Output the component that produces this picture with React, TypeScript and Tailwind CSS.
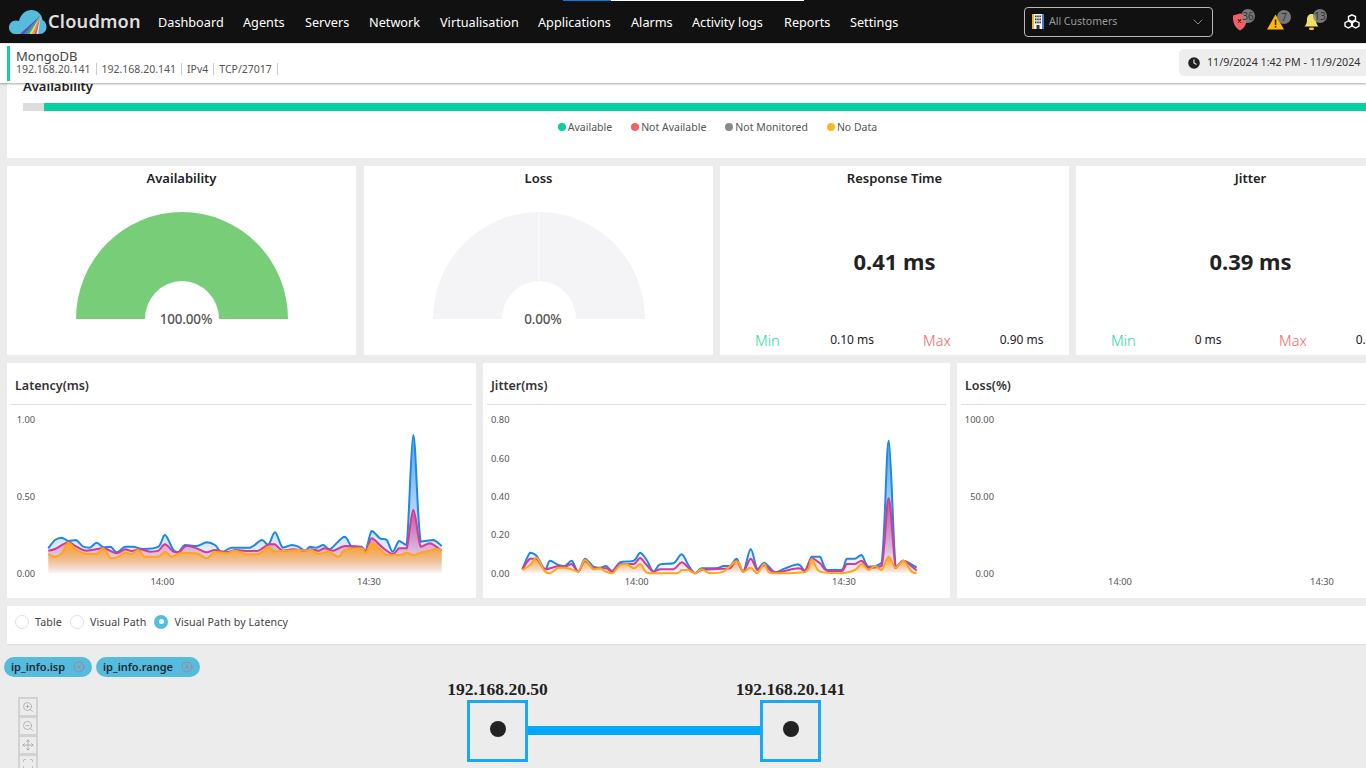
import React from "react";
import { ChevronDown, ZoomIn, ZoomOut, Move, Scan, XCircle } from "lucide-react";

type P = [number, number];
const BASE = 520;

function clamp(v: number, a: number, b: number) {
  return Math.min(Math.max(v, Math.min(a, b)), Math.max(a, b));
}
function line(p: P[]) {
  let d = `M${p[0][0]} ${p[0][1]}`;
  for (let i = 0; i < p.length - 1; i++) {
    const a = p[Math.max(i - 1, 0)], b = p[i], c = p[i + 1], e = p[Math.min(i + 2, p.length - 1)];
    const c1x = b[0] + (c[0] - a[0]) / 6, c1y = clamp(b[1] + (c[1] - a[1]) / 6, b[1], c[1]);
    const c2x = c[0] - (e[0] - b[0]) / 6, c2y = clamp(c[1] - (e[1] - b[1]) / 6, b[1], c[1]);
    d += ` C${c1x.toFixed(1)} ${c1y.toFixed(1)} ${c2x.toFixed(1)} ${c2y.toFixed(1)} ${c[0]} ${c[1]}`;
  }
  return d;
}
function area(p: P[]) {
  return `${line(p)} L${p[p.length - 1][0]} ${BASE} L${p[0][0]} ${BASE} Z`;
}

const latBlue: P[] = [[145,445],[165,420],[185,413],[205,423],[228,420],[250,440],[270,443],[290,428],[310,442],[332,440],[350,457],[375,440],[400,440],[430,447],[475,440],[495,405],[520,450],[535,457],[555,435],[590,438],[620,427],[645,435],[665,457],[695,443],[750,443],[785,420],[805,435],[825,397],[848,443],[875,435],[895,440],[915,452],[930,440],[950,443],[970,435],[990,448],[1033,410],[1055,440],[1085,440],[1097,455],[1115,393],[1140,415],[1160,420],[1178,455],[1197,423],[1220,435],[1240,105],[1262,425],[1300,420],[1325,438]];
const latPink: P[] = [[145,452],[165,447],[205,427],[230,440],[260,452],[310,445],[350,460],[375,448],[395,453],[420,448],[450,455],[475,452],[495,433],[520,455],[535,458],[560,437],[590,445],[620,457],[645,450],[680,457],[705,450],[740,453],[775,452],[805,433],[825,433],[848,452],[880,448],[915,452],[935,448],[955,452],[975,445],[1000,452],[1035,438],[1085,442],[1097,457],[1115,415],[1145,440],[1178,462],[1197,445],[1220,445],[1240,330],[1262,440],[1290,430],[1325,452]];
const latOrange: P[] = [[145,462],[165,470],[185,460],[205,428],[230,450],[260,462],[290,462],[310,445],[332,475],[350,472],[375,458],[395,462],[415,450],[435,470],[475,470],[495,455],[515,470],[545,458],[590,460],[620,475],[645,455],[680,460],[705,452],[740,463],[775,463],[805,440],[825,455],[855,452],[895,450],[915,452],[935,450],[955,462],[985,455],[1015,470],[1035,450],[1085,445],[1097,460],[1115,430],[1145,452],[1160,465],[1200,465],[1220,458],[1240,465],[1262,458],[1310,447],[1325,452]];

const jitBlue: P[] = [[127,508],[150,458],[170,468],[195,508],[210,482],[235,495],[255,498],[275,482],[295,515],[315,476],[340,500],[360,503],[378,498],[397,513],[420,487],[462,482],[480,458],[500,480],[520,515],[540,493],[580,490],[605,463],[625,495],[645,520],[665,505],[710,505],[730,498],[750,498],[770,476],[790,515],[812,447],[832,508],[853,488],[885,517],[915,505],[955,493],[975,512],[995,470],[1020,470],[1040,510],[1085,510],[1100,476],[1125,476],[1145,465],[1165,500],[1205,488],[1226,122],[1247,503],[1270,482],[1310,503]];
const jitPink: P[] = [[127,508],[150,476],[170,476],[195,508],[235,498],[255,500],[275,492],[295,515],[315,482],[340,505],[378,505],[397,515],[420,492],[462,492],[480,474],[500,495],[520,515],[540,508],[580,508],[605,487],[625,503],[645,520],[665,510],[730,506],[750,505],[770,482],[790,515],[812,476],[832,510],[853,495],[885,517],[955,505],[975,514],[995,475],[1020,490],[1040,512],[1085,514],[1100,492],[1125,492],[1145,482],[1165,503],[1205,498],[1226,295],[1247,503],[1270,482],[1310,512]];
const jitOrange: P[] = [[127,510],[150,495],[170,473],[195,515],[210,520],[235,503],[255,503],[275,508],[295,515],[315,480],[340,508],[360,505],[378,515],[397,520],[420,495],[440,492],[462,505],[480,492],[500,518],[520,520],[590,520],[605,510],[625,510],[645,520],[665,508],[690,520],[730,515],[770,484],[790,515],[812,503],[832,520],[853,492],[875,520],[975,516],[995,478],[1020,515],[1085,520],[1125,510],[1145,492],[1165,510],[1185,498],[1205,510],[1226,470],[1247,503],[1270,482],[1295,515],[1310,520]];

function Series({ id, blue, pink, orange }: { id: string; blue: P[]; pink: P[]; orange: P[] }) {
  return (
    <>
      <defs>
        <linearGradient id={`${id}b`} x1="0" y1="0" x2="0" y2="1">
          <stop offset="0" stopColor="#1e88e5" stopOpacity="0.75" />
          <stop offset="1" stopColor="#1e88e5" stopOpacity="0.02" />
        </linearGradient>
        <linearGradient id={`${id}p`} x1="0" y1="0" x2="0" y2="1">
          <stop offset="0" stopColor="#d63a92" stopOpacity="0.8" />
          <stop offset="1" stopColor="#d63a92" stopOpacity="0.02" />
        </linearGradient>
        <linearGradient id={`${id}o`} x1="0" y1="0" x2="0" y2="1">
          <stop offset="0" stopColor="#ffa41b" stopOpacity="0.95" />
          <stop offset="1" stopColor="#ffa41b" stopOpacity="0.02" />
        </linearGradient>
      </defs>
      <path d={area(blue)} fill={`url(#${id}b)`} />
      <path d={area(pink)} fill={`url(#${id}p)`} />
      <path d={area(orange)} fill={`url(#${id}o)`} />
      <path d={line(blue)} fill="none" stroke="#1e88e5" strokeWidth="6" />
      <path d={line(pink)} fill="none" stroke="#d63a92" strokeWidth="6" />
      <path d={line(orange)} fill="none" stroke="#ffa41b" strokeWidth="6" />
    </>
  );
}

const axis = { fontSize: 28, fill: "#555" };

function Latency() {
  return (
    <svg width="469" height="193" viewBox="21 15 1407 579">
      <text x="50" y="68" {...axis}>1.00</text>
      <text x="50" y="300" {...axis}>0.50</text>
      <text x="50" y="530" {...axis}>0.00</text>
      <text x="487" y="555" textAnchor="middle" {...axis}>14:00</text>
      <text x="1107" y="555" textAnchor="middle" {...axis}>14:30</text>
      <Series id="l" blue={latBlue} pink={latPink} orange={latOrange} />
    </svg>
  );
}
function Jitter() {
  return (
    <svg width="467" height="193" viewBox="9 15 1401 579">
      {([["0.80", 68], ["0.60", 185], ["0.40", 300], ["0.20", 415], ["0.00", 530]] as [string, number][]).map(([t, y]) => (
        <text key={t} x="33" y={y} {...axis}>{t}</text>
      ))}
      <text x="470" y="555" textAnchor="middle" {...axis}>14:00</text>
      <text x="1092" y="555" textAnchor="middle" {...axis}>14:30</text>
      <Series id="j" blue={jitBlue} pink={jitPink} orange={jitOrange} />
    </svg>
  );
}
function LossChart() {
  return (
    <svg width="469" height="193" viewBox="-9 15 1407 579">
      <text x="102" y="68" textAnchor="end" {...axis}>100.00</text>
      <text x="102" y="300" textAnchor="end" {...axis}>50.00</text>
      <text x="102" y="530" textAnchor="end" {...axis}>0.00</text>
      <text x="480" y="555" textAnchor="middle" {...axis}>14:00</text>
      <text x="1086" y="555" textAnchor="middle" {...axis}>14:30</text>
    </svg>
  );
}

function Logo() {
  return (
    <svg width="38" height="26" viewBox="9 8 38 26" className="shrink-0">
      <path d="M15 33C11.5 33 9 30 9 26.5C9 22.5 12 19.5 16 19.5C17 19.5 18 19.7 19 20C20.5 13.5 25.5 9 31.5 9C37.5 9 42 13.5 42.5 19C45 20 46.5 23 46.5 26C46.5 30 43.5 33 40 33Z" fill="#55bcde" />
      <polygon points="41,14 20,33 24,33" fill="#6d45ad" />
      <polygon points="41,14 24,33 27,33" fill="#3f7fd2" />
      <polygon points="41,14 27,33 29.5,33" fill="#35b56a" />
      <polygon points="41,14 29.5,33 32,33" fill="#f2e04a" />
      <polygon points="41,14 32,33 34.5,33" fill="#f5993a" />
      <polygon points="41,14 34.5,33 36.5,33" fill="#e8496a" />
      <polygon points="41,14 36.5,33 38,33" fill="#f4e9e0" />
    </svg>
  );
}

function Badge({ n, cls }: { n: string; cls: string }) {
  return (
    <span className={`absolute top-[-4px] flex h-[14px] w-[14px] items-center justify-center rounded-full bg-[#8a8a8ad9] text-[10px] leading-none text-[#333] ${cls}`}>
      {n}
    </span>
  );
}

const nav: [string, string][] = [
  ["Dashboard", "w-[85px]"], ["Agents", "w-[62px]"], ["Servers", "w-[64px]"], ["Network", "w-[71px]"],
  ["Virtualisation", "w-[98px]"], ["Applications", "w-[93px]"], ["Alarms", "w-[61px]"], ["Activity logs", "w-[92px]"],
  ["Reports", "w-[66px]"], ["Settings", "w-[60px]"],
];

function Header() {
  return (
    <header className="flex h-[43px] items-center bg-[#111111] pl-[9px]">
      <Logo />
      <span className="ml-[1px] w-[110px] text-[18.2px] font-semibold leading-none tracking-[0.2px] text-[#dedede]">Cloudmon</span>
      <nav className="flex pt-[2px]">
        {nav.map(([t, w]) => (
          <span key={t} className={`${w} shrink-0 whitespace-nowrap text-[12.7px] text-white`}>{t}</span>
        ))}
      </nav>
      <div className="ml-auto flex items-center pr-[6px]">
        <div className="flex h-[30px] w-[189px] items-center rounded-[4px] border border-[#b8b8b8] pl-[7px] pr-[6px]">
          <svg width="12" height="15" viewBox="0 0 12 15" className="shrink-0">
            <rect width="12" height="15" fill="#f5f5f5" />
            <rect width="2" height="15" fill="#f0b429" />
            <rect x="10" width="2" height="15" fill="#3b82c4" />
            {[3, 6, 9].map((y) => [3, 5.2, 7.4].map((x) => <rect key={`${x}${y}`} x={x} y={y - 1.5} width="1.5" height="1.8" fill="#333" />))}
            <rect x="4.5" y="11" width="3" height="4" fill="#333" />
          </svg>
          <span className="ml-[5px] pt-[1px] text-[10.5px] text-[#9a9a9a]">All Customers</span>
          <ChevronDown className="ml-auto text-[#a8a8a8]" size={16} strokeWidth={1.2} />
        </div>
        <div className="relative ml-[19px] h-[18px] w-[16px]">
          <svg width="16" height="18" viewBox="0 0 16 18">
            <path d="M1 2.5L8 .5L15 2.5C15.5 9 13.5 14.5 8 17.5C2.5 14.5.5 9 1 2.5Z" fill="#f05f63" />
            <path d="M6 6.5L9 9.5M9 6.5L6 9.5" stroke="#5a1518" strokeWidth="1.2" />
          </svg>
          <Badge n="36" cls="left-[9px]" />
        </div>
        <div className="relative ml-[19px] h-[16px] w-[17px]">
          <svg width="17" height="16" viewBox="0 0 17 16">
            <path d="M8.5 .5L17 15.5H0Z" fill="#ffb70f" />
            <rect x="7.8" y="5.5" width="1.5" height="5.5" fill="#222" />
            <rect x="7.8" y="12" width="1.5" height="1.6" fill="#222" />
          </svg>
          <Badge n="7" cls="left-[10px]" />
        </div>
        <div className="relative ml-[20px] h-[18px] w-[15px]">
          <svg width="15" height="18" viewBox="0 0 15 18">
            <path d="M7.5 1C4.5 1 3 3.5 3 6.5C3 10 2 12 .5 13.5H14.5C13 12 12 10 12 6.5C12 3.5 10.5 1 7.5 1Z" fill="#f0e266" />
            <rect x="5" y="14.5" width="5" height="2.5" rx="1.2" fill="#e8c93a" />
          </svg>
          <Badge n="13" cls="left-[9px]" />
        </div>
        <svg width="16" height="15" viewBox="0 0 16 15" className="ml-[25px]" fill="none" stroke="#fff" strokeWidth="1.4">
          <path d="M8 .8L11.5 2.5V6L8 7.7L4.5 6V2.5Z" />
          <path d="M4.3 7L7.6 8.7V12.2L4.3 14L1 12.2V8.7Z" />
          <path d="M11.7 7L15 8.7V12.2L11.7 14L8.4 12.2V8.7Z" />
        </svg>
      </div>
    </header>
  );
}

function SubHeader() {
  const parts = ["192.168.20.141", "192.168.20.141", "IPv4", "TCP/27017"];
  return (
    <div className="relative z-10 mt-[1px] flex h-[39px] justify-between bg-white pl-[7px] shadow-[0_1px_2px_rgba(0,0,0,0.35)]">
      <div className="my-[2px] flex border-l-[3px] border-[#12cfa0] pl-[6px]">
        <div className="pt-[3px]">
          <div className="text-[13px] leading-[14px] text-[#444]">MongoDB</div>
          <div className="flex text-[10.5px] leading-[12px] text-[#555]">
            {parts.map((p, i) => (
              <span key={i} className={`border-r border-[#ccc] pr-[5px] ${i ? "pl-[5px]" : ""}`}>{p}</span>
            ))}
          </div>
        </div>
      </div>
      <div className="mt-[5px] flex h-[27px] w-[200px] shrink-0 items-center self-start overflow-hidden whitespace-nowrap rounded-[5px] bg-[#eeeeee] pl-[9px] mr-[-13px]">
        <svg width="12" height="12" viewBox="0 0 12 12" className="shrink-0">
          <circle cx="6" cy="6" r="5.8" fill="#222" />
          <path d="M6 2.5V6L8.5 7.5" fill="none" stroke="#eee" strokeWidth="1.1" />
        </svg>
        <span className="ml-[7px] text-[10.7px] text-[#333]">11/9/2024 1:42 PM - 11/9/2024</span>
      </div>
    </div>
  );
}

function AvailabilityBar() {
  const legend: [string, string][] = [["Available", "bg-[#05d09f]"], ["Not Available", "bg-[#f26464]"], ["Not Monitored", "bg-[#8a8a8a]"], ["No Data", "bg-[#fdb81e]"]];
  return (
    <section className="flow-root h-[75px] w-[1420px] bg-white pl-[16px]">
      <h2 className="mt-[-7px] h-[20px] text-[13px] font-semibold leading-[20px] text-[#222]">Availability</h2>
      <div className="mt-[7px] flex h-[8px]">
        <div className="w-[21px] bg-[#dddddd]" />
        <div className="flex-1 bg-[#05d09f]" />
      </div>
      <div className="mt-[10px] flex w-[1389px] justify-center gap-[19px] text-[10.5px] leading-[12px] text-[#555]">
        {legend.map(([t, c]) => (
          <span key={t} className="flex items-center gap-[2px]">
            <i className={`h-[8px] w-[8px] rounded-full ${c}`} />
            {t}
          </span>
        ))}
      </div>
    </section>
  );
}

function Gauge({ title, value, green, cls }: { title: string; value: string; green: boolean; cls?: string }) {
  return (
    <section className={`flex h-[189px] w-[349px] shrink-0 flex-col items-center bg-white ${cls ?? ""}`}>
      <h3 className="h-[24px] text-[13px] font-semibold leading-[24px] text-[#222]">{title}</h3>
      <svg width="214" height="118" viewBox="-1 0 214 118" className="mt-[22px]">
        <path d="M0 107A106 107 0 0 1 212 107H143A37 38 0 0 0 69 107Z" fill={green ? "#78ce78" : "#f4f4f6"} />
        {!green && <line x1="106" y1="0" x2="106" y2="69" stroke="#fff" />}
        <text x="110" y="112" textAnchor="middle" fontSize="13.5" fontWeight="500" letterSpacing="-0.2" fill="#555">{value}</text>
      </svg>
    </section>
  );
}

function Stat({ title, value, min, max }: { title: string; value: string; min: string; max: string }) {
  return (
    <section className="flex h-[189px] w-[349px] shrink-0 flex-col bg-white px-[5px]">
      <h3 className="h-[24px] text-center text-[13px] font-semibold leading-[24px] text-[#222]">{title}</h3>
      <div className="mt-[56px] text-center text-[22px] font-bold leading-[30px] text-[#222]">{value}</div>
      <div className="mt-[52px] grid grid-cols-4 items-center text-center">
        <span className="text-[14.5px] font-light leading-[24px] text-[#1fd8a4]">Min</span>
        <span className="text-[12px] text-[#222]">{min}</span>
        <span className="text-[14.5px] font-light leading-[24px] text-[#f45f5f]">Max</span>
        <span className="text-[12px] text-[#222]">{max}</span>
      </div>
    </section>
  );
}

function ChartCard({ title, w, children }: { title: string; w: string; children: React.ReactNode }) {
  return (
    <section className={`${w} h-[235px] shrink-0 bg-white`}>
      <div className="mx-[4px] h-[42px] border-b border-[#dddddd] pl-[4px] text-[12.5px] font-semibold leading-[46px] text-[#333]">{title}</div>
      {children}
    </section>
  );
}

function Radio({ label, on }: { label: string; on?: boolean }) {
  return (
    <span className="flex items-center">
      {on ? (
        <span className="flex h-[14px] w-[14px] items-center justify-center rounded-full bg-[#55bcde]">
          <span className="h-[5px] w-[5px] rounded-full bg-white" />
        </span>
      ) : (
        <span className="h-[14px] w-[14px] rounded-full border border-[#dcdfe6]" />
      )}
      <span className="ml-[6px] text-[10.7px] tracking-[0.1px] text-[#444]">{label}</span>
    </span>
  );
}

function Tag({ t, w }: { t: string; w: string }) {
  return (
    <span className={`flex h-[20px] ${w} items-center justify-between rounded-full bg-[#55bcde] pl-[7px] pr-[7px] text-[11px] font-semibold text-[#1c2a33]`}>
      {t}
      <XCircle size={12} strokeWidth={1.3} className="shrink-0 text-[#e0606a]" />
    </span>
  );
}

function Node({ label }: { label: string }) {
  return (
    <div className="flex w-[61px] shrink-0 flex-col items-center">
      <div className="h-[22px] whitespace-nowrap font-[Liberation_Serif,serif] text-[17.5px] font-bold leading-[22px] text-[#222]">{label}</div>
      <div className="flex h-[62px] w-[61px] items-center justify-center border-[3px] border-[#1aa7f5]">
        <span className="mb-[4px] h-[16px] w-[16px] rounded-full bg-[#222]" />
      </div>
    </div>
  );
}

export default function App() {
  const tools = [ZoomIn, ZoomOut, Move, Scan];
  return (
    <div className="relative h-screen w-[1366px] overflow-hidden bg-[#ececec] font-[Noto_Sans,Liberation_Sans,sans-serif]">
      <div className="absolute left-[563px] top-0 z-20 flex h-[1px]">
        <div className="w-[48px] bg-[#0a78e0]" />
        <div className="w-[193px] bg-white" />
      </div>
      <Header />
      <SubHeader />
      <main className="w-[1430px] pl-[7px]">
        <AvailabilityBar />
        <div className="mt-[8px] flex gap-[7px]">
          <Gauge title="Availability" value="100.00%" green cls="mr-[1px]" />
          <Gauge title="Loss" value="0.00%" green={false} />
          <Stat title="Response Time" value="0.41 ms" min="0.10 ms" max="0.90 ms" />
          <Stat title="Jitter" value="0.39 ms" min="0 ms" max="0.69 ms" />
        </div>
        <div className="mt-[8px] flex gap-[7px]">
          <ChartCard title="Latency(ms)" w="w-[469px]"><Latency /></ChartCard>
          <ChartCard title="Jitter(ms)" w="w-[467px]"><Jitter /></ChartCard>
          <ChartCard title="Loss(%)" w="w-[469px]"><LossChart /></ChartCard>
        </div>
        <div className="mt-[8px] flex h-[38px] w-[1420px] items-center gap-[8px] bg-white pb-[6px] pl-[8px] shadow-[0_1px_1px_rgba(0,0,0,0.05)]">
          <Radio label="Table" />
          <Radio label="Visual Path" />
          <Radio label="Visual Path by Latency" on />
        </div>
      </main>
      <div className="ml-[4px] mt-[13px] flex gap-[4px]">
        <Tag t="ip_info.isp" w="w-[88px]" />
        <Tag t="ip_info.range" w="w-[104px]" />
      </div>
      <div className="ml-[18px] mt-[1px] flex">
        <div className="mt-[19px] flex w-[20px] shrink-0 flex-col">
          {tools.map((I, i) => (
            <span key={i} className="-mb-[1px] flex h-[20px] w-[20px] items-center justify-center border-2 border-[#d2d2d2] text-[#999]">
              <I size={12} strokeWidth={1.3} />
            </span>
          ))}
        </div>
        <div className="ml-[429px] flex">
          <Node label="192.168.20.50" />
          <div className="mt-[48px] h-[9px] w-[232px] bg-[#00a9ff]" />
          <Node label="192.168.20.141" />
        </div>
      </div>
    </div>
  );
}
